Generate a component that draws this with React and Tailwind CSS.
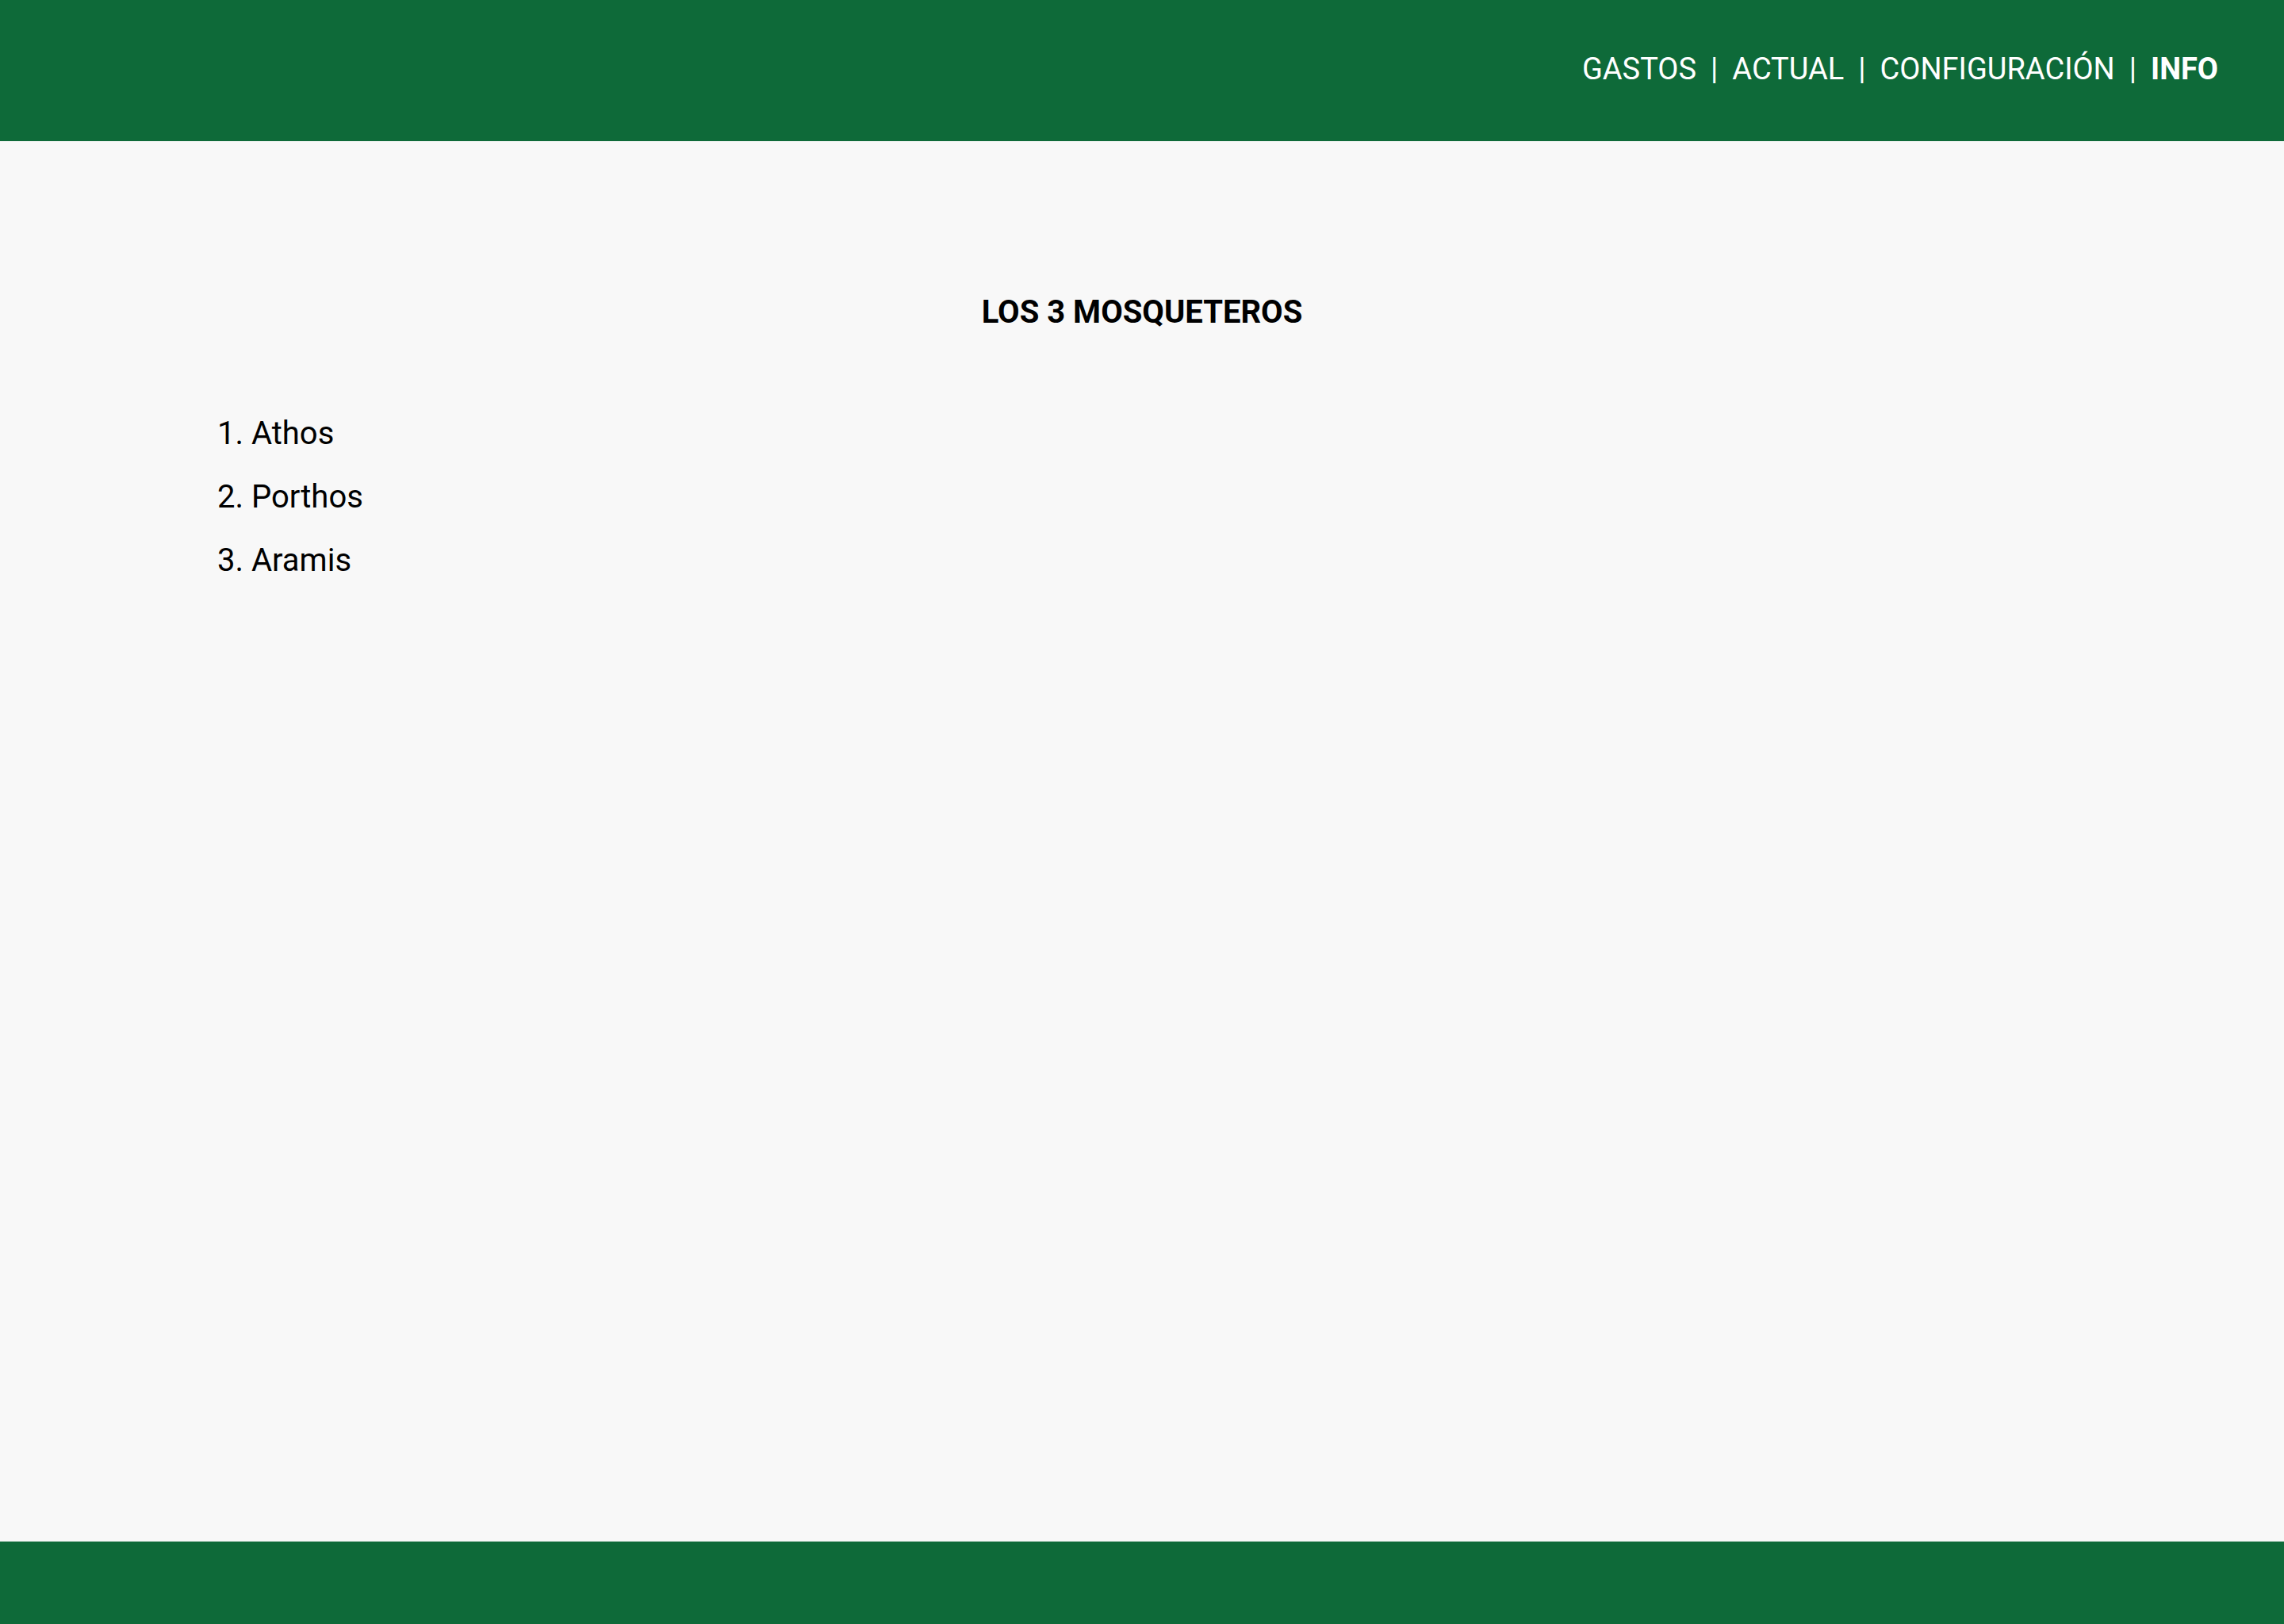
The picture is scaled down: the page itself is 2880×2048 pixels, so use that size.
export default function App() {
  const links = ['GASTOS', 'ACTUAL', 'CONFIGURACIÓN'];
  const names = ['Athos', 'Porthos', 'Aramis'];

  return (
    <div className="min-h-screen flex flex-col bg-[#f8f8f8] font-['Roboto',sans-serif] text-black">
      <header className="h-[178px] bg-[#0e6a39] flex items-center justify-end pr-[83px] pb-[4px] text-white text-[38px] leading-none">
        {links.map((l) => (
          <span key={l} className="flex items-center">
            <span>{l}</span>
            <span className="mx-[18px]">|</span>
          </span>
        ))}
        <span className="font-bold">INFO</span>
      </header>

      <main className="flex-1 pt-[193px]">
        <h1 className="text-center text-[40px] leading-[46px] font-bold mb-[90px]">LOS 3 MOSQUETEROS</h1>
        <ol className="list-decimal list-inside pl-[274px] text-[40px] leading-[80px]">
          {names.map((n) => (
            <li key={n}>{n}</li>
          ))}
        </ol>
      </main>

      <footer className="h-[104px] bg-[#0e6a39]" />
    </div>
  );
}
